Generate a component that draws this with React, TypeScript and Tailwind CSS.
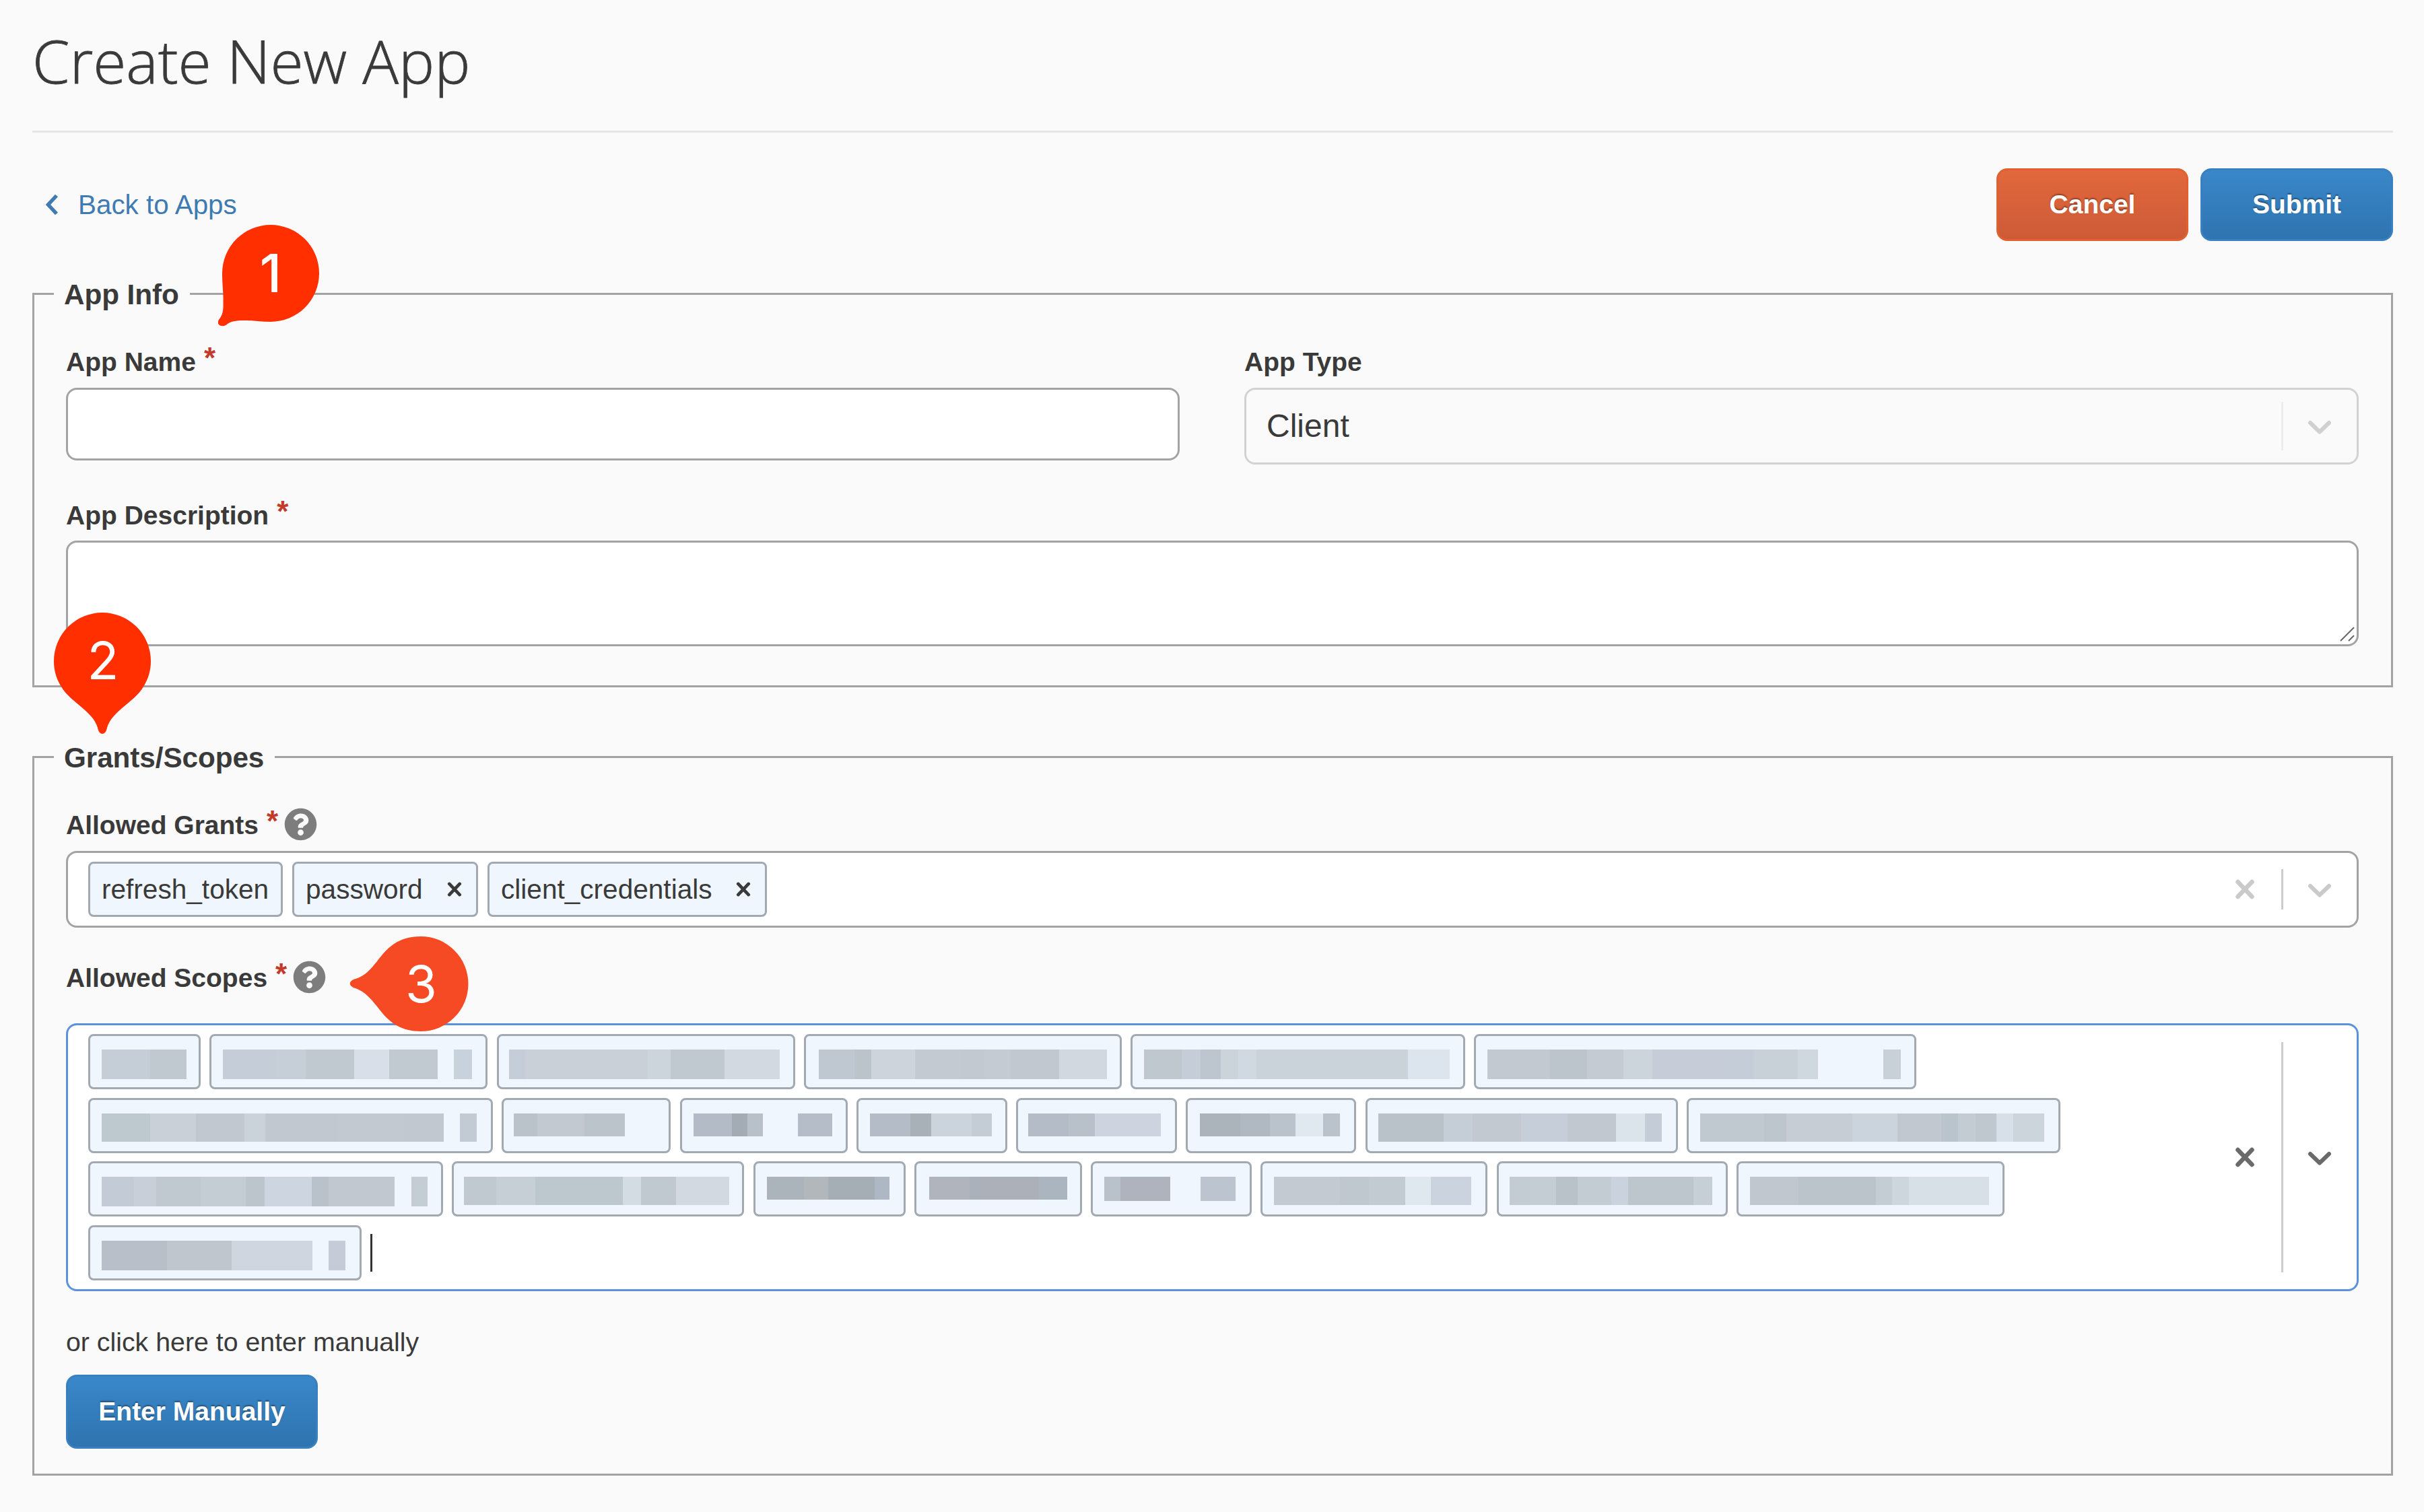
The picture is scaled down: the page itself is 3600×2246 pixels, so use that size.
import type { ReactNode } from 'react';
import clsx from 'clsx';
import { FaQuestionCircle } from 'react-icons/fa';

type Piece = [width: number, color: string];

interface Scope {
  width: number;
  pad: number;
  height: number;
  pieces: Piece[];
}

const NONE = 'transparent';

// Redacted scope names, one entry per chip
const scopeRows: Scope[][] = [
  [
    { width: 167, pad: 20, height: 44, pieces: [[72, '#c5cdd6'], [54, '#c0c9d0']] },
    { width: 413, pad: 20, height: 44, pieces: [[79, '#c5cdd9'], [44, '#c6ced7'], [72, '#c0c8d0'], [52, '#d8dfe8'], [72, '#c1c9d1'], [24, NONE], [27, '#c8d2dc']] },
    { width: 443, pad: 18, height: 44, pieces: [[25, '#c4cdd8'], [181, '#c9d0d8'], [34, '#cdd5dc'], [80, '#c0c8d0'], [82, '#d2d9e0']] },
    { width: 472, pad: 22, height: 44, pieces: [[53, '#bfc7d1'], [25, '#bcc4cb'], [65, '#cdd4dc'], [67, '#c3cad2'], [37, '#c2c9d1'], [38, '#c4cbd3'], [72, '#c1c8d0'], [71, '#d1d8e0']] },
    { width: 497, pad: 20, height: 44, pieces: [[56, '#bfc7cf'], [28, '#c4cdd8'], [30, '#bdc5cf'], [26, '#cbd3db'], [27, '#d0d8e2'], [225, '#cad2da'], [62, '#dce4ee']] },
    { width: 657, pad: 20, height: 44, pieces: [[93, '#c2c9d1'], [55, '#bcc4cc'], [54, '#c4cbd3'], [43, '#cdd5dc'], [96, '#c6cdd8'], [55, '#c5cdd8'], [65, '#c8d0d8'], [30, '#cfd7df'], [97, NONE], [26, '#c8d0d8']] },
  ],
  [
    { width: 601, pad: 20, height: 42, pieces: [[72, '#bdc9ce'], [68, '#c9d0d8'], [72, '#c1c8d0'], [31, '#cad2da'], [108, '#c1c8d0'], [98, '#c2c9d1'], [59, '#c1c8d0'], [24, NONE], [25, '#c2cbd4']] },
    { width: 251, pad: 18, height: 34, pieces: [[35, '#bac2ca'], [70, '#c2c9d1'], [60, '#bbc3cb']] },
    { width: 249, pad: 20, height: 34, pieces: [[57, '#b3bbc6'], [23, '#a3abb5'], [23, '#b8c1ca'], [52, NONE], [51, '#b5bdc8']] },
    { width: 224, pad: 20, height: 34, pieces: [[60, '#b4bcc7'], [31, '#a8b0b8'], [60, '#cbd3dc'], [30, '#c4ccd5']] },
    { width: 239, pad: 18, height: 34, pieces: [[60, '#b4bcc7'], [39, '#b8c1ca'], [98, '#cdd4df']] },
    { width: 253, pad: 21, height: 34, pieces: [[60, '#abb3bb'], [44, '#b0b8c2'], [38, '#bac2cb'], [41, '#e0e8f0'], [25, '#bac2cb']] },
    { width: 464, pad: 19, height: 42, pieces: [[97, '#b9c1c9'], [43, '#c5cdd6'], [72, '#c2c9d1'], [69, '#c6cfd9'], [72, '#c1c8d0'], [43, '#dce4eb'], [25, '#c4ccd7']] },
    { width: 555, pad: 20, height: 42, pieces: [[95, '#c0c8d0'], [33, '#bdc5cd'], [98, '#c6cdd5'], [67, '#cbd3dd'], [65, '#c1c8d0'], [25, '#bac4cc'], [26, '#c3cbd3'], [31, '#bfc7cf'], [25, '#d7e0e8'], [46, '#ccd5dc']] },
  ],
  [
    { width: 527, pad: 20, height: 44, pieces: [[48, '#c3cbd7'], [33, '#c8cfd8'], [66, '#c0c8d0'], [67, '#c4ccd4'], [28, '#bcc4cc'], [70, '#cdd5e0'], [25, '#b9c2ca'], [98, '#c1c8d0'], [25, NONE], [24, '#c4ccd4']] },
    { width: 434, pad: 18, height: 42, pieces: [[48, '#c0c8d0'], [58, '#c6ced6'], [130, '#bcc8ce'], [27, '#d3dbe3'], [52, '#c0c8d0'], [79, '#d2d9e1']] },
    { width: 226, pad: 20, height: 34, pieces: [[55, '#abb3bb'], [36, '#b1b7bb'], [69, '#a5adb5'], [22, '#adb8c4']] },
    { width: 249, pad: 22, height: 34, pieces: [[60, '#afb4bd'], [22, '#abb1ba'], [81, '#abb0b9'], [42, '#abb5c0']] },
    { width: 239, pad: 20, height: 36, pieces: [[24, '#b9c2ca'], [74, '#aeb3bd'], [45, NONE], [52, '#bcc4cf']] },
    { width: 337, pad: 20, height: 42, pieces: [[98, '#c3cad2'], [43, '#bfc7cf'], [54, '#c2cad2'], [38, '#dfe7ef'], [60, '#cbd3de']] },
    { width: 343, pad: 19, height: 42, pieces: [[29, '#c3cbd3'], [40, '#c4ccd4'], [32, '#b9c1c9'], [50, '#c3cbd3'], [25, '#cad2de'], [97, '#bdc5cd'], [28, '#c6ced6']] },
    { width: 398, pad: 20, height: 42, pieces: [[72, '#c0c7cf'], [115, '#bbc3cb'], [24, '#c4ccd4'], [25, '#cdd5dd'], [119, '#d7dfe7']] },
  ],
  [
    { width: 406, pad: 20, height: 44, pieces: [[97, '#b8bfc9'], [96, '#bfc6ce'], [120, '#cfd6df'], [24, NONE], [25, '#c5ccd7']] },
  ],
];

const grants = [
  { name: 'refresh_token', width: 'w-[289px]', removable: false },
  { name: 'password', width: 'w-[276px]', removable: true },
  { name: 'client_credentials', width: 'w-[415px]', removable: true },
];

const Cross = ({ className }: { className: string }) => (
  <svg viewBox="0 0 30 30" className={className} fill="none" stroke="currentColor" strokeLinecap="round">
    <path d="M4.5 4L25.5 26M25.5 4L4.5 26" strokeWidth="6.5" />
  </svg>
);

const Chevron = ({ className }: { className?: string }) => (
  <svg viewBox="0 0 36 22" className={clsx('mt-[3px] w-9 h-[22px]', className)} fill="none" stroke="currentColor" strokeLinecap="round" strokeLinejoin="round">
    <path d="M4 4L18 17.5L32 4" strokeWidth="6" />
  </svg>
);

const Label = ({ children, required, help }: { children: string; required?: boolean; help?: boolean }) => (
  <div className="h-12 flex items-center text-[39px] leading-[48px] font-bold">
    <span className="pt-[3px]">{children}</span>
    {required && <span className="ml-3 -mt-2 text-[#c13a2b] text-[44px]">*</span>}
    {help && <FaQuestionCircle size={49} className="ml-[9px] text-[#7d7d7d]" />}
  </div>
);

const Button = ({ children, className }: { children: string; className: string }) => (
  <button className={clsx('rounded-2xl text-white font-bold text-[39px] [text-shadow:0_-2px_2px_rgba(0,0,0,0.35)]', className)}>
    {children}
  </button>
);

const Section = ({ title, className, children }: { title: string; className: string; children: ReactNode }) => (
  <fieldset className={clsx('border-[3px] border-[#a3a3a3] pl-[47px] pr-12', className)}>
    <legend className="-ml-[18px] pl-[15px] pr-4 h-12 text-[42.3px] leading-[51px] tracking-[-0.1px] font-bold">{title}</legend>
    {children}
  </fieldset>
);

const ScopeChip = ({ scope }: { scope: Scope }) => (
  <div
    className="h-[82px] shrink-0 flex items-start pt-5 rounded-lg border-[3px] border-[#a3a9b0] bg-[#eff6fe]"
    style={{ width: scope.width, paddingLeft: scope.pad - 3 }}
  >
    {scope.pieces.map(([width, color], i) => (
      <span key={i} style={{ width, height: scope.height, backgroundColor: color }} />
    ))}
  </div>
);

const App = () => {
  return (
    <div className="relative w-[3600px] h-[2246px] overflow-hidden bg-[#fafafa] pl-12 pr-[46px] text-[#3a3a3a] font-['Liberation_Sans',Arial,sans-serif]">
      <header className="h-[197px] border-b-[3px] border-[#e6e6e6]">
        <h1 className="pt-7 text-[89.4px] leading-[122px] font-light [-webkit-text-stroke:0.8px_#3a3a3a] font-['Open_Sans',sans-serif]">Create New App</h1>
      </header>

      <div className="mt-[53px] h-[108px] flex items-center justify-between">
        <a className="flex items-center text-[40.4px] text-[#3f7bb0]">
          <svg viewBox="0 0 20 32" className="ml-[19px] mr-[29px] w-5 h-8" fill="none" stroke="currentColor" strokeWidth="5.5">
            <path d="M17 2.5L4.5 16L17 29.5" />
          </svg>
          Back to Apps
        </a>
        <div className="flex gap-[18px]">
          <Button className="w-[285px] h-[108px] border-[3px] border-[#e0602f] bg-linear-to-b from-[#e2683c] to-[#cd5a37]">Cancel</Button>
          <Button className="w-[286px] h-[108px] border-[3px] border-[#3a80c0] bg-linear-to-b from-[#3a87c9] to-[#2e74b0]">Submit</Button>
        </div>
      </div>

      <Section title="App Info" className="mt-[54px] h-[609px]">
        <div className="mt-[52px] flex items-start gap-24">
          <div className="w-[1654px]">
            <Label required>App Name</Label>
            <div className="mt-4 h-[108px] rounded-2xl border-[3px] border-[#a3a3a3] bg-white" />
          </div>
          <div className="flex-1">
            <Label>App Type</Label>
            <div className="mt-4 h-[114px] flex items-center rounded-2xl border-[3px] border-[#d2d2d2] pl-[30px] pr-[37px]">
              <span className="flex-1 text-[48px]">Client</span>
              <span className="w-[3px] h-[72px] bg-[#ececec]" />
              <Chevron className="ml-9 text-[#d0d0d0]" />
            </div>
          </div>
        </div>
        <div className="mt-[50px]">
          <Label required>App Description</Label>
        </div>
        <div className="mt-[15px] h-[157px] flex items-end justify-end rounded-2xl border-[3px] border-[#a3a3a3] bg-white">
          <svg viewBox="0 0 22 22" className="w-[22px] h-[22px] mr-[3px] mb-1" stroke="#666" strokeWidth="2">
            <path d="M1 21L21 1M13 21L21 13" />
          </svg>
        </div>
      </Section>

      <Section title="Grants/Scopes" className="mt-[79px] h-[1092px]">
        <div className="mt-[52px]">
          <Label required help>Allowed Grants</Label>
        </div>
        <div className="mt-4 h-[114px] flex items-center rounded-2xl border-[3px] border-[#a3a3a3] bg-white pl-[30px] pr-[37px]">
          <div className="flex-1 flex gap-[14px]">
            {grants.map((grant) => (
              <div key={grant.name} className={clsx('h-[82px] flex items-center rounded-lg border-[3px] border-[#a3a9b0] bg-[#eff6fe] pl-[17px] text-[40.6px] whitespace-nowrap', grant.width)}>
                {grant.name}
                {grant.removable && <Cross className="ml-auto mr-[21px] w-[22px] h-[22px]" />}
              </div>
            ))}
          </div>
          <Cross className="w-[30px] h-[30px] text-[#cacaca]" />
          <span className="ml-[39px] w-[3px] h-[60px] bg-[#cccccc]" />
          <Chevron className="ml-9 text-[#cacaca]" />
        </div>

        <div className="mt-[49px]">
          <Label required help>Allowed Scopes</Label>
        </div>
        <div className="mt-[45px] h-[398px] flex items-center rounded-2xl border-[3px] border-[#5b92dd] bg-white pl-[30px] pr-[37px]">
          <div className="flex-1 flex flex-col gap-[12.5px]">
            {scopeRows.map((row, i) => (
              <div key={i} className="flex items-center gap-[13.3px]">
                {row.map((scope, j) => (
                  <ScopeChip key={j} scope={scope} />
                ))}
                {i === scopeRows.length - 1 && <span className="w-[3px] h-14 bg-[#333333]" />}
              </div>
            ))}
          </div>
          <Cross className="w-[30px] h-[30px] text-[#6a6a6a]" />
          <span className="ml-[39px] w-[3px] h-[342px] bg-[#cccccc]" />
          <Chevron className="ml-9 text-[#6a6a6a]" />
        </div>

        <p className="mt-[51px] text-[39.3px] leading-[48px]">or click here to enter manually</p>
        <Button className="mt-[25px] w-[374px] h-[110px] border-[3px] border-[#3a80c0] bg-linear-to-b from-[#3a87c9] to-[#2e74b0]">Enter Manually</Button>
      </Section>

      {/* Numbered step pins */}
      <div className="absolute left-[324px] top-[334px] w-[150px] h-[151px]">
        <svg viewBox="0 0 150 151" className="absolute inset-0" fill="#ff2f00">
          <path d="M78 0A72 72 0 0 1 78 144C64 144 52 142 42 142C30 142 22 142 14 147C7 154 -4 149 1 141C6 134 8 130 7.500 114C8 100 6 90 6 72A72 72 0 0 1 78 0Z" />
        </svg>
        <span className="absolute left-[6px] top-0 w-[144px] text-center text-[78px] leading-[143px] font-medium text-white font-['Inter',sans-serif]">1</span>
      </div>
      <div className="absolute left-[80px] top-[910px] w-[144px] h-[180px]">
        <svg viewBox="0 0 144 180" className="absolute inset-0" fill="#ff2f00">
          <path d="M72 0A72 72 0 0 1 144 72C144 87 140 99 133 110C120 133 86 146 79 171C77 183 67 183 65 171C58 146 24 133 11 110C4 99 0 87 0 72A72 72 0 0 1 72 0Z" />
        </svg>
        <span className="absolute left-[1px] top-0 w-[144px] text-center text-[77px] leading-[143px] font-normal text-white font-['Inter',sans-serif]">2</span>
      </div>
      <div className="absolute left-[519px] top-[1391px] w-[177px] h-[141px]">
        <svg viewBox="0 0 177 141" className="absolute inset-0" fill="#f64a24">
          <path d="M106 0A70.500 70.500 0 0 1 106 141C72 141 56 124 41 104C32 93 23 82 9 77C-2 74 -2 66 9 63C23 59 32 48 41 37C56 17 72 0 106 0Z" />
        </svg>
        <span className="absolute left-[36px] top-0 w-[141px] text-center text-[76px] leading-[141px] font-normal text-white font-['Inter',sans-serif]">3</span>
      </div>
    </div>
  );
};

export default App;
